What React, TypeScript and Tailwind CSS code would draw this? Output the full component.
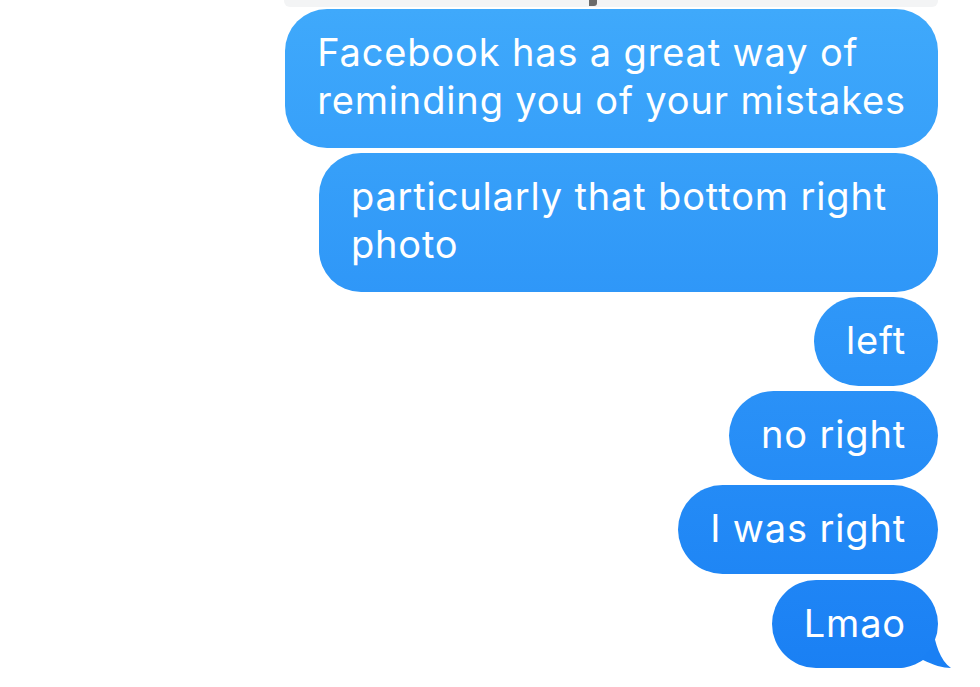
import React from "react";

const font = { fontFamily: "Inter, 'Noto Sans', sans-serif" };

export default function App() {
  return (
    <div className="w-[980px] h-[687px] bg-white overflow-hidden relative" style={font}>
      <div className="flex justify-end pr-[42px]">
        <div className="w-[654px] h-[7px] bg-[#f3f4f5] rounded-b-[6px] relative">
          <div className="absolute left-[305px] top-0 w-[8px] h-[6px] bg-[#6b6b6b] rounded-br-[3px]" />
        </div>
      </div>
      <div className="flex flex-col items-end gap-[5px] pr-[42px] pt-[2px] text-white text-[38px] leading-[48px] tracking-[0.85px]">
        <div className="rounded-[42px] px-[32px] pt-[19px] pb-[24px] whitespace-nowrap bg-gradient-to-b from-[#3fa9fb] to-[#37a0fa]">
          Facebook has a great way of<br />reminding you of your mistakes
        </div>
        <div className="rounded-[42px] pl-[32px] pr-[51px] pt-[19px] pb-[24px] whitespace-nowrap bg-gradient-to-b from-[#37a0f9] to-[#2f97f8]">
          particularly that bottom right<br />photo
        </div>
        <div className="rounded-[45px] px-[32px] pt-[19px] pb-[22px] whitespace-nowrap bg-gradient-to-b from-[#2f97f8] to-[#2a92f7]">
          left
        </div>
        <div className="rounded-[45px] px-[32px] pt-[19px] pb-[22px] whitespace-nowrap bg-gradient-to-b from-[#2a91f7] to-[#258cf6]">
          no right
        </div>
        <div className="rounded-[45px] px-[32px] pt-[19px] pb-[22px] whitespace-nowrap bg-gradient-to-b from-[#248bf6] to-[#1f86f5]">
          I was right
        </div>
        <div className="relative mt-[1px]">
          <div className="rounded-[44px] px-[32px] pt-[19px] pb-[21px] whitespace-nowrap bg-gradient-to-b from-[#1f85f5] to-[#1a80f4] relative z-10">
            Lmao
          </div>
          <svg className="absolute right-[-15px] bottom-0 z-0" width="60" height="40" viewBox="0 0 60 40">
            <path
              d="M0 0 L40 0 C42 16 47 32 58 40 C50 40 40 37 30 32 C24 36 16 39.5 8 40 L0 40 Z"
              fill="#1a80f4"
            />
          </svg>
        </div>
      </div>
    </div>
  );
}
